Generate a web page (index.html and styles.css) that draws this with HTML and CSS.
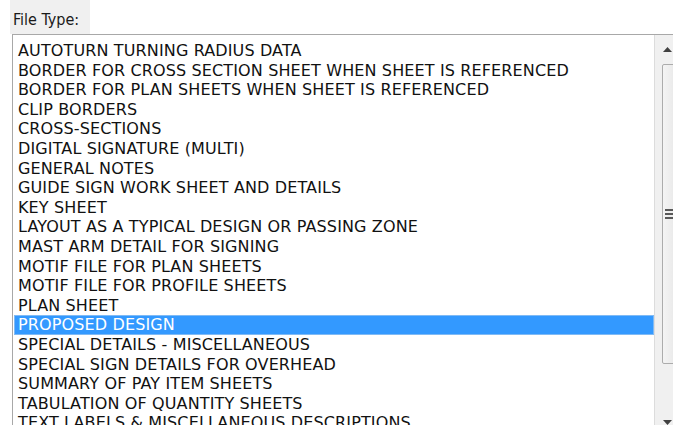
FILE: index.html
```html
<!DOCTYPE html>
<html>
<head>
<meta charset="utf-8">
<link rel="stylesheet" href="styles.css">
</head>
<body>
<div class="page">
  <div class="label-box"><span class="label">File Type:</span></div>
  <div class="listbox">
    <ul class="items">
      <li>AUTOTURN TURNING RADIUS DATA</li>
      <li>BORDER FOR CROSS SECTION SHEET WHEN SHEET IS REFERENCED</li>
      <li>BORDER FOR PLAN SHEETS WHEN SHEET IS REFERENCED</li>
      <li>CLIP BORDERS</li>
      <li>CROSS-SECTIONS</li>
      <li>DIGITAL SIGNATURE (MULTI)</li>
      <li>GENERAL NOTES</li>
      <li>GUIDE SIGN WORK SHEET AND DETAILS</li>
      <li>KEY SHEET</li>
      <li>LAYOUT AS A TYPICAL DESIGN OR PASSING ZONE</li>
      <li>MAST ARM DETAIL FOR SIGNING</li>
      <li>MOTIF FILE FOR PLAN SHEETS</li>
      <li>MOTIF FILE FOR PROFILE SHEETS</li>
      <li>PLAN SHEET</li>
      <li class="selected">PROPOSED DESIGN</li>
      <li>SPECIAL DETAILS - MISCELLANEOUS</li>
      <li>SPECIAL SIGN DETAILS FOR OVERHEAD</li>
      <li>SUMMARY OF PAY ITEM SHEETS</li>
      <li>TABULATION OF QUANTITY SHEETS</li>
      <li>TEXT LABELS &amp; MISCELLANEOUS DESCRIPTIONS</li>
    </ul>
    <div class="scrollbar">
      <div class="arrow up"><svg width="9" height="5" viewBox="0 0 9 5"><path d="M0 5 L4.5 0 L9 5 Z" fill="#404040"/></svg></div>
      <div class="track">
        <div class="thumb">
          <span class="grip"></span><span class="grip"></span><span class="grip"></span>
        </div>
      </div>
      <div class="arrow down"><svg width="9" height="5" viewBox="0 0 9 5"><path d="M0 0 L9 0 L4.5 5 Z" fill="#404040"/></svg></div>
    </div>
  </div>
</div>
</body>
</html>
```
FILE: styles.css
```css
html, body {
  margin: 0;
  padding: 0;
  background: #ffffff;
  overflow: hidden;
}

.page {
  width: 673px;
  height: 425px;
  overflow: hidden;
  display: flex;
  flex-direction: column;
  font-family: "DejaVu Sans", sans-serif;
  color: #111;
}

.label-box {
  margin-left: 10px;
  width: 80px;
  height: 34px;
  background: #f0f0f0;
  padding: 11px 0 0 3px;
  box-sizing: border-box;
}

.label {
  font-family: "DejaVu Sans Condensed", "DejaVu Sans", sans-serif;
  font-size: 16px;
  color: #1a1a1a;
  line-height: 18px;
  display: block;
}

.listbox {
  margin-left: 12px;
  flex: 1;
  display: flex;
  border-top: 1px solid #a8a8a8;
  border-left: 1px solid #a8a8a8;
  min-height: 0;
}

.items {
  list-style: none;
  margin: 0;
  padding: 6px 0 0 1px;
  flex: 1;
  overflow: hidden;
}

.items li {
  height: 19.6px;
  line-height: 19.6px;
  font-size: 16px;
  letter-spacing: 0.13px;
  padding-left: 4px;
  white-space: nowrap;
  box-sizing: border-box;
}

.items li.selected {
  background: #3399ff;
  color: #ffffff;
  box-shadow: inset 0 0 0 1px #7fbaf5;
}

.scrollbar {
  width: 24px;
  flex: none;
  margin-right: -6px;
  background: #f0f0f0;
  border-left: 1px solid #dcdcdc;
  display: flex;
  flex-direction: column;
}

.arrow {
  height: 24px;
  display: flex;
  align-items: center;
  justify-content: center;
  flex: none;
}

.arrow.up { margin-top: 2px; }

.track {
  flex: 1;
  padding-top: 3px;
  padding-bottom: 46px;
  display: flex;
  flex-direction: column;
}

.thumb {
  margin-left: 7px;
  height: 298px;
  background: linear-gradient(to right, #f4f4f4, #e6e6e6);
  border: 1px solid #acacac;
  border-radius: 2px;
  display: flex;
  flex-direction: column;
  align-items: flex-start;
  justify-content: center;
  gap: 2px;
  padding-left: 2px;
}

.grip {
  display: block;
  width: 10px;
  height: 2px;
  background: #595959;
}
```
